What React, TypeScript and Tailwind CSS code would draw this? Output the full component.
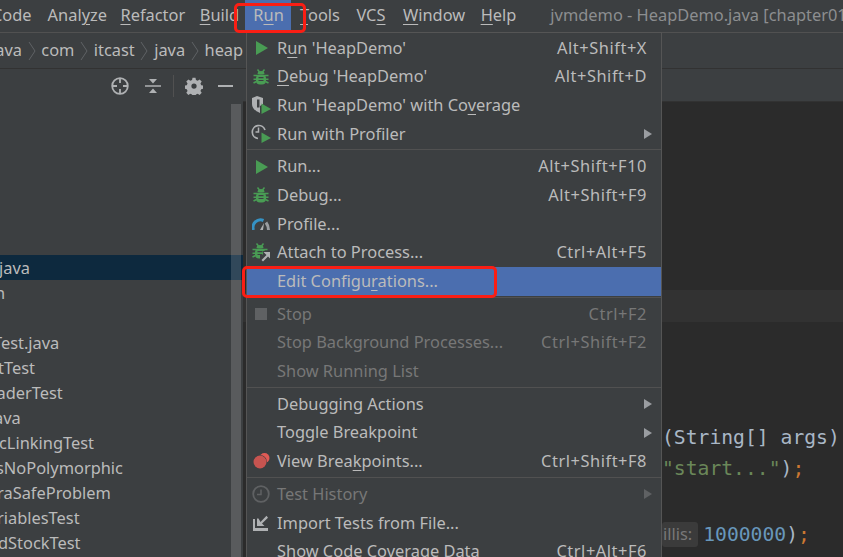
import type { ReactNode } from "react";

const U = ({ children }: { children: ReactNode }) => (
  <span className="underline decoration-1 underline-offset-[3px]">{children}</span>
);

function Play() {
  return (
    <svg viewBox="0 0 12 14" className="ml-[2px] h-[14px] w-[12px]">
      <path d="M0 0 12 7 0 14Z" fill="#499c54" />
    </svg>
  );
}

function Bug() {
  return (
    <svg viewBox="0 0 16 16" className="h-[16px] w-[16px]" fill="none">
      <path d="M4.500.5 6.500 3M11.500.5 9.500 3" stroke="#499c54" strokeWidth="1.500" />
      <path d="M4.500 5a3.500 3 0 0 1 7 0Z" fill="#499c54" />
      <rect x="3" y="5.500" width="10" height="10" rx="4" fill="#499c54" />
      <path d="M.5 6.500h15M.5 10.200h15M.5 14l3-1.500M15.500 14l-3-1.500" stroke="#499c54" strokeWidth="1.600" />
      <path d="M5.500 8.700h5M5.500 11.500h5" stroke="#3c3f41" strokeWidth="1.200" />
    </svg>
  );
}

const menuIcons: Record<string, ReactNode> = {
  run: <Play />,
  debug: <Bug />,
  coverage: (
    <svg viewBox="0 0 20 18" className="h-[18px] w-[20px]">
      <path d="M1 2 6 0l6 2v6l-3 2v7C4 15 1 12 1 8Z" fill="#afb1b3" />
      <path d="M6 3.500h2.500v8H6Z" fill="#3c3f41" />
      <path d="M10.500 7.500 20 13l-9.500 5Z" fill="#499c54" />
    </svg>
  ),
  profiler: (
    <svg viewBox="0 0 20 19" className="h-[19px] w-[20px]" fill="none">
      <path d="M7 14.500A6.500 6.500 0 1 1 14 6" stroke="#afb1b3" strokeWidth="1.700" />
      <path d="M7.500 3.500V8H4.500" stroke="#afb1b3" strokeWidth="1.500" />
      <path d="M10.500 8.500 20 14l-9.500 5Z" fill="#499c54" />
    </svg>
  ),
  gauge: (
    <svg viewBox="0 0 18 12" className="h-[12px] w-[18px]" fill="none">
      <path d="M1.500 12A7.500 7.500 0 0 1 11.500 2.500" stroke="#3592c4" strokeWidth="3" />
      <path d="M14 4.500c1.500 2 2.500 4 2.500 7.500" stroke="#9a9da1" strokeWidth="3" />
      <path d="M8 12 12 5l-1 7Z" fill="#afb1b3" />
    </svg>
  ),
  attach: (
    <div className="relative h-[19px] w-[19px]">
      <Bug />
      <svg viewBox="0 0 11 11" className="absolute bottom-0 right-0 h-[11px] w-[11px]">
        <path d="M0 11V4h3V0h8v11Z" fill="#3c3f41" />
        <path d="M3.500 1H10v6.500L8 5.500 3 10.500 1.500 9l5-5Z" fill="#afb1b3" />
      </svg>
    </div>
  ),
  stop: <div className="h-[12px] w-[12px] bg-[#5f6163]" />,
  breakpoints: (
    <svg viewBox="0 0 17 16" className="h-[16px] w-[17px]">
      <circle cx="11.500" cy="5" r="5" fill="#e05a55" />
      <circle cx="7" cy="9" r="7" fill="#3c3f41" />
      <circle cx="7" cy="9" r="6.500" fill="#c75450" />
    </svg>
  ),
  history: (
    <svg viewBox="0 0 18 18" className="h-[18px] w-[18px]" fill="none" stroke="#5f6163">
      <circle cx="9" cy="9" r="7.800" strokeWidth="1.800" />
      <path d="M9 4.500V9.500H5" strokeWidth="1.500" />
    </svg>
  ),
  importTests: (
    <svg viewBox="0 0 16 16" className="h-[16px] w-[16px]" fill="#afb1b3">
      <path d="M0 4h2v9h13v3H0Z" />
      <path d="M4 3.500V11h7.500L9 8.500 15 2.800 13.500.8 7.500 7l-2-3.500Z" />
    </svg>
  ),
};

type Row = {
  label: ReactNode;
  icon?: string;
  shortcut?: string;
  arrow?: boolean;
  disabled?: boolean;
  selected?: boolean;
};

const menuGroups: Row[][] = [
  [
    { icon: "run", label: <>R<U>u</U>n 'HeapDemo'</>, shortcut: "Alt+Shift+X" },
    { icon: "debug", label: <><U>D</U>ebug 'HeapDemo'</>, shortcut: "Alt+Shift+D" },
    { icon: "coverage", label: <>Run 'HeapDemo' with Co<U>v</U>erage</> },
    { icon: "profiler", label: "Run with Profiler", arrow: true },
  ],
  [
    { icon: "run", label: "Run...", shortcut: "Alt+Shift+F10" },
    { icon: "debug", label: "Debug...", shortcut: "Alt+Shift+F9" },
    { icon: "gauge", label: "Profile..." },
    { icon: "attach", label: "Attach to Process...", shortcut: "Ctrl+Alt+F5" },
    { label: <>Edit Configu<U>r</U>ations...</>, selected: true },
  ],
  [
    { icon: "stop", label: "Stop", shortcut: "Ctrl+F2", disabled: true },
    { label: "Stop Background Processes...", shortcut: "Ctrl+Shift+F2", disabled: true },
    { label: "Show Running List", disabled: true },
  ],
  [
    { label: "Debugging Actions", arrow: true },
    { label: "Toggle Breakpoint", arrow: true },
    { icon: "breakpoints", label: <>View Brea<U>k</U>points...</>, shortcut: "Ctrl+Shift+F8" },
  ],
  [
    { icon: "history", label: "Test History", arrow: true, disabled: true },
    { icon: "importTests", label: "Import Tests from File..." },
    { label: "Show Code Coverage Data", shortcut: "Ctrl+Alt+F6" },
  ],
];

function MenuRow({ row }: { row: Row }) {
  return (
    <div
      className={`flex h-[28.7px] shrink-0 items-center ${row.selected ? "bg-[#4b6eaf]" : ""} ${
        row.disabled ? "text-[#777777]" : "text-[#bbbbbb]"
      }`}
    >
      <div className="flex w-[30px] shrink-0 items-center justify-center pr-[2px]">
        {row.icon ? menuIcons[row.icon] : null}
      </div>
      <span className="whitespace-nowrap">{row.label}</span>
      {row.shortcut ? <span className="ml-auto pr-[14px] tracking-[0.55px]">{row.shortcut}</span> : null}
      {row.arrow ? (
        <svg viewBox="0 0 8 10" className="ml-auto mr-[9px] h-[10px] w-[8px]">
          <path d="M0 0 8 5 0 10Z" fill={row.disabled ? "#5f6163" : "#9a9da1"} />
        </svg>
      ) : null}
    </div>
  );
}

function RunMenu() {
  return (
    <div className="absolute left-[246px] top-[32px] flex h-[525px] w-[416px] flex-col overflow-hidden border-x border-t border-[#555555] bg-[#3c3f41] pt-[0.5px] text-[16.4px]">
      {menuGroups.map((group, i) => (
        <div key={i} className={i > 0 ? "mt-[1px] border-t border-[#515151] pt-[2px]" : ""}>
          {group.map((row, j) => (
            <MenuRow key={j} row={row} />
          ))}
        </div>
      ))}
    </div>
  );
}

function Chevron() {
  return (
    <svg viewBox="0 0 8 20" className="mx-[5.7px] h-[20px] w-[8px]" fill="none" stroke="#5f6265">
      <path d="M1 1 7 10 1 19" />
    </svg>
  );
}

const treeRows = [
  { text: "java", cls: "-ml-[1px]", selected: true },
  { text: "n", cls: "-ml-[5px]" },
  { text: "", cls: "" },
  { text: "Test.java", cls: "-ml-[7px]" },
  { text: "tTest", cls: "-ml-[2px]" },
  { text: "aderTest", cls: "-ml-[3.5px]" },
  { text: "ava", cls: "-ml-[6px]" },
  { text: "cLinkingTest", cls: "-ml-[1px]" },
  { text: "sNoPolymorphic", cls: "-ml-[4px]" },
  { text: "raSafeProblem", cls: "-ml-[3px]" },
  { text: "riablesTest", cls: "-ml-[3px]" },
  { text: "dStockTest", cls: "-ml-[2px]" },
];

function ProjectPanel() {
  return (
    <div className="flex h-full w-[243px] shrink-0 flex-col">
      <div className="flex h-[34px] shrink-0 items-center text-[#afb1b3]">
        <svg viewBox="0 0 18 18" className="ml-[111px] h-[18px] w-[18px]" fill="none" stroke="currentColor" strokeWidth="1.800">
          <circle cx="9" cy="9" r="7.800" />
          <path d="M9 1v5M9 12v5M1 9h5M12 9h5" />
        </svg>
        <svg viewBox="0 0 16 16" className="ml-[16px] h-[16px] w-[16px]" fill="currentColor">
          <path d="M0 7.200h16v1.600H0ZM4 1h8L8 5.500ZM8 10.500 12 15H4Z" />
        </svg>
        <div className="ml-[12px] h-[22px] w-px bg-[#515151]" />
        <svg viewBox="0 0 24 24" className="ml-[11px] h-[18px] w-[18px]" fill="currentColor">
          <path fillRule="evenodd" d="M10 1h4l.6 3 2.300 1 2.600-1.700 2.800 2.800-1.700 2.600 1 2.300 3 .6v4l-3 .6-1 2.300 1.700 2.600-2.800 2.800-2.600-1.700-2.300 1-.6 3h-4l-.6-3-2.300-1-2.600 1.700-2.800-2.800 1.700-2.600-1-2.300-3-.6v-4l3-.6 1-2.300L1.700 6.100l2.800-2.800 2.600 1.700 2.300-1ZM12 8.500a3.500 3.500 0 1 0 0 7 3.500 3.500 0 0 0 0-7Z" />
        </svg>
        <div className="ml-[15px] h-[2px] w-[15px] bg-[#afb1b3]" />
      </div>
      <div className="relative flex-1 overflow-hidden pt-[152px] text-[16.4px] text-[#bbbbbb]">
        {treeRows.map((row, i) => (
          <div key={i} className={`flex h-[25px] items-center whitespace-nowrap pt-[2px] ${row.selected ? "bg-[#0d293e]" : ""}`}>
            <span className={row.cls}>{row.text}</span>
          </div>
        ))}
        {/* scrollbar thumb sits over the rows */}
        <div className="absolute bottom-0 right-[2px] top-[1px] w-[10px] bg-white/15" />
      </div>
    </div>
  );
}

function Editor() {
  return (
    <div className="flex h-full min-w-0 flex-1 flex-col bg-[#3c3f41]">
      <div className="h-[33px] shrink-0 border-b border-[#323232]" />
      <div className="flex flex-1 flex-col overflow-hidden bg-[#2b2b2b] font-['DejaVu_Sans_Mono',monospace] text-[19.7px] text-[#a9b7c6]">
        <div className="mt-[188px] h-[32px] shrink-0 bg-[#323232]" />
        <div className="mt-[100px] flex h-[31px] shrink-0 items-center whitespace-pre pl-[419px]">(String[] args)</div>
        <div className="flex h-[31px] shrink-0 items-center whitespace-pre pl-[419px]">
          <span className="text-[#6a8759]">"start..."</span>
          <span>)</span>
          <span className="text-[#cc7832]">;</span>
        </div>
        <div className="h-[35px] shrink-0" />
        <div className="flex h-[31px] shrink-0 items-center whitespace-pre pl-[419px]">
          <span className="mr-[5px] rounded-[3px] bg-[#3b3b3b] pl-[1px] pr-[6px] font-['Noto_Sans',sans-serif] text-[16.4px] text-[#787878]">illis:</span>
          <span className="text-[#6897bb]">1000000</span>
          <span>)</span>
          <span className="text-[#cc7832]">;</span>
        </div>
      </div>
    </div>
  );
}

export default function App() {
  return (
    <div className="relative h-[557px] w-[843px] overflow-hidden bg-[#3c3f41] font-['Noto_Sans',sans-serif] text-[16.4px] text-[#bbbbbb]">
      {/* Menu bar */}
      <div className="flex h-[33px] items-center border-b border-[#515151] pb-[2px] whitespace-nowrap">
        <span className="-ml-[8px] shrink-0">Code</span>
        <span className="ml-[16px] shrink-0">Anal<U>y</U>ze</span>
        <span className="ml-[13.5px] shrink-0"><U>R</U>efactor</span>
        <span className="ml-[14.5px] shrink-0"><U>B</U>uild</span>
        <span className="ml-[6px] -mb-[2px] flex h-[32px] w-[46px] shrink-0 items-center justify-center bg-[#4b6eaf] pb-[2px] pl-[1px]">R<U>u</U>n</span>
        <span className="ml-[9px] shrink-0"><U>T</U>ools</span>
        <span className="ml-[16.5px] shrink-0">VC<U>S</U></span>
        <span className="ml-[17.5px] shrink-0"><U>W</U>indow</span>
        <span className="ml-[15.5px] shrink-0"><U>H</U>elp</span>
        <span className="ml-[34px] shrink-0 text-[#8c8e90]">jvmdemo - HeapDemo.java [chapter01]</span>
      </div>
      {/* Breadcrumbs */}
      <div className="flex h-[36px] items-center border-b border-[#323232] whitespace-nowrap">
        <span className="-ml-[9px]">java</span>
        <Chevron />
        <span>com</span>
        <Chevron />
        <span>itcast</span>
        <Chevron />
        <span>java</span>
        <Chevron />
        <span>heap</span>
      </div>
      <div className="flex h-[488px]">
        <ProjectPanel />
        <Editor />
      </div>
      <RunMenu />
      {/* Red annotation boxes */}
      <div className="absolute left-[234px] top-[3px] h-[30px] w-[72px] rounded-[5px] border-[3px] border-[#fa1e14]" />
      <div className="absolute left-[242px] top-[266px] h-[32px] w-[255px] rounded-[5px] border-[3px] border-[#fa1e14]" />
    </div>
  );
}
